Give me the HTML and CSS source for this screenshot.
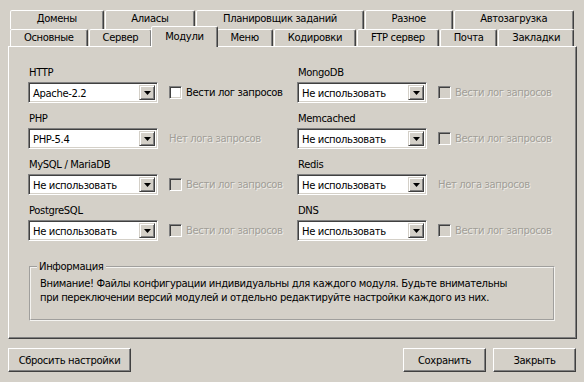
FILE: index.html
```html
<!DOCTYPE html>
<html lang="ru">
<head>
  <meta charset="UTF-8" />
  <title>Настройки — Модули</title>
  <link rel="stylesheet" href="styles.css">
</head>
<body>

  <div class="tabs">
    <div class="tab-row back">
      <div class="tab">Домены</div>
      <div class="tab">Алиасы</div>
      <div class="tab">Планировщик заданий</div>
      <div class="tab">Разное</div>
      <div class="tab">Автозагрузка</div>
    </div>
    <div class="tab-row front">
      <div class="tab">Основные</div>
      <div class="tab">Сервер</div>
      <div class="tab active">Модули</div>
      <div class="tab">Меню</div>
      <div class="tab">Кодировки</div>
      <div class="tab">FTP сервер</div>
      <div class="tab">Почта</div>
      <div class="tab">Закладки</div>
    </div>
  </div>

  <div class="panel">
    <div class="grid">
      <div class="field">
        <div class="caption">HTTP</div>
        <div class="control">
          <div class="combo"><span class="value">Apache-2.2</span><span class="drop"><svg width="7" height="4"><polygon points="0,0 7,0 3.5,4" fill="#000"/></svg></span></div>
          <div class="check"><span class="box"></span>Вести лог запросов</div>
        </div>
      </div>
      <div class="field">
        <div class="caption">MongoDB</div>
        <div class="control">
          <div class="combo"><span class="value">Не использовать</span><span class="drop"><svg width="7" height="4"><polygon points="0,0 7,0 3.5,4" fill="#000"/></svg></span></div>
          <div class="check disabled"><span class="box"></span>Вести лог запросов</div>
        </div>
      </div>

      <div class="field">
        <div class="caption">PHP</div>
        <div class="control">
          <div class="combo"><span class="value">PHP-5.4</span><span class="drop"><svg width="7" height="4"><polygon points="0,0 7,0 3.5,4" fill="#000"/></svg></span></div>
          <div class="note">Нет лога запросов</div>
        </div>
      </div>
      <div class="field">
        <div class="caption">Memcached</div>
        <div class="control">
          <div class="combo"><span class="value">Не использовать</span><span class="drop"><svg width="7" height="4"><polygon points="0,0 7,0 3.5,4" fill="#000"/></svg></span></div>
          <div class="check disabled"><span class="box"></span>Вести лог запросов</div>
        </div>
      </div>

      <div class="field">
        <div class="caption">MySQL / MariaDB</div>
        <div class="control">
          <div class="combo"><span class="value">Не использовать</span><span class="drop"><svg width="7" height="4"><polygon points="0,0 7,0 3.5,4" fill="#000"/></svg></span></div>
          <div class="check disabled"><span class="box"></span>Вести лог запросов</div>
        </div>
      </div>
      <div class="field">
        <div class="caption">Redis</div>
        <div class="control">
          <div class="combo"><span class="value">Не использовать</span><span class="drop"><svg width="7" height="4"><polygon points="0,0 7,0 3.5,4" fill="#000"/></svg></span></div>
          <div class="note">Нет лога запросов</div>
        </div>
      </div>

      <div class="field">
        <div class="caption">PostgreSQL</div>
        <div class="control">
          <div class="combo"><span class="value">Не использовать</span><span class="drop"><svg width="7" height="4"><polygon points="0,0 7,0 3.5,4" fill="#000"/></svg></span></div>
          <div class="check disabled"><span class="box"></span>Вести лог запросов</div>
        </div>
      </div>
      <div class="field">
        <div class="caption">DNS</div>
        <div class="control">
          <div class="combo"><span class="value">Не использовать</span><span class="drop"><svg width="7" height="4"><polygon points="0,0 7,0 3.5,4" fill="#000"/></svg></span></div>
          <div class="check disabled"><span class="box"></span>Вести лог запросов</div>
        </div>
      </div>
    </div>

    <fieldset class="info">
      <legend>Информация</legend>
      Внимание! Файлы конфигурации индивидуальны для каждого модуля. Будьте внимательны<br />
      при переключении версий модулей и отдельно редактируйте настройки каждого из них.
    </fieldset>
  </div>

  <div class="footer">
    <button class="btn btn-reset">Сбросить настройки</button>
    <button class="btn btn-save">Сохранить</button>
    <button class="btn">Закрыть</button>
  </div>

</body>
</html>
```

FILE: styles.css
```css
* {
  box-sizing: border-box;
}
body {
  margin: 0;
  padding: 10px 7px 0 8px;
  width: 584px;
  height: 382px;
  overflow: hidden;
  background-color: #d4d0c8;
  font-family: "DejaVu Sans", Tahoma, sans-serif;
  font-size: 10px;
  letter-spacing: -0.35px;
  color: #000;
}

/* tabs */
.tabs {
  margin: 0 3px 0 2px;
}
.tab-row {
  display: flex;
  gap: 1px;
}
.tab-row.back {
  height: 19px;
}
.tab-row.front {
  height: 17px;
}
.tab {
  flex: 1 1 auto;
  text-align: center;
  white-space: nowrap;
  line-height: 16px;
  border: 1px solid;
  border-bottom: none;
  border-color: #fff #404040 transparent #fff;
  border-radius: 2px 2px 0 0;
  box-shadow: inset -1px 0 #808080;
  background: #d4d0c8;
}
.tab.active {
  position: relative;
  z-index: 1;
  height: 21px;
  margin: -3px -2px 0;
  padding-top: 2px;
}

/* panel */
.panel {
  height: 293px;
  padding: 19px 0 0 19px;
  border: 1px solid;
  border-color: #fff #404040 #404040 #fff;
  box-shadow: inset -1px -1px #808080;
}
.grid {
  display: grid;
  grid-template-columns: 269px 1fr;
  row-gap: 9px;
}
.caption {
  line-height: 14px;
  margin-bottom: 2px;
  padding-left: 1px;
}
.control {
  display: flex;
  align-items: center;
}
.combo {
  display: flex;
  width: 130px;
  height: 21px;
  padding: 2px;
  background: #fff;
  border: 1px solid;
  border-color: #808080 #fff #fff #808080;
  box-shadow: inset 1px 1px #404040, inset -1px -1px #d4d0c8;
}
.combo .value {
  flex: 1;
  padding-left: 2px;
  line-height: 17px;
  white-space: nowrap;
  overflow: hidden;
}
.combo .drop {
  display: flex;
  align-items: center;
  justify-content: center;
  width: 16px;
  background: #d4d0c8;
  border: 1px solid;
  border-color: #d4d0c8 #404040 #404040 #d4d0c8;
  box-shadow: inset 1px 1px #fff, inset -1px -1px #808080;
}
.check {
  display: flex;
  align-items: center;
  gap: 4px;
  margin-left: 11px;
  white-space: nowrap;
}
.box {
  width: 13px;
  height: 13px;
  background: #fff;
  border: 1px solid;
  border-color: #808080 #fff #fff #808080;
  box-shadow: inset 1px 1px #404040, inset -1px -1px #d4d0c8;
}
.check.disabled,
.note {
  color: #a19e97;
  text-shadow: 1px 1px 0 #eeece8;
}
.check.disabled .box {
  background: #d4d0c8;
}
.note {
  margin-left: 11px;
  white-space: nowrap;
}

/* info group */
.info {
  width: 526px;
  margin: 19px 0 0 1px;
  padding: 3px 9px 14px;
  border: 2px groove #f4f3f0;
  line-height: 14px;
  white-space: nowrap;
}
.info legend {
  padding: 0 2px;
  margin-left: -3px;
  line-height: 14px;
}

/* buttons */
.footer {
  display: flex;
  gap: 7px;
  margin-top: 9px;
  padding-right: 1px;
}
.btn {
  height: 24px;
  width: 83px;
  padding: 0;
  font-family: inherit;
  font-size: 10px;
  letter-spacing: inherit;
  color: #000;
  background: #d4d0c8;
  border: 1px solid;
  border-color: #fff #404040 #404040 #fff;
  box-shadow: inset -1px -1px #808080;
}
.btn-reset {
  width: 123px;
}
.btn-save {
  margin-left: auto;
}
```
